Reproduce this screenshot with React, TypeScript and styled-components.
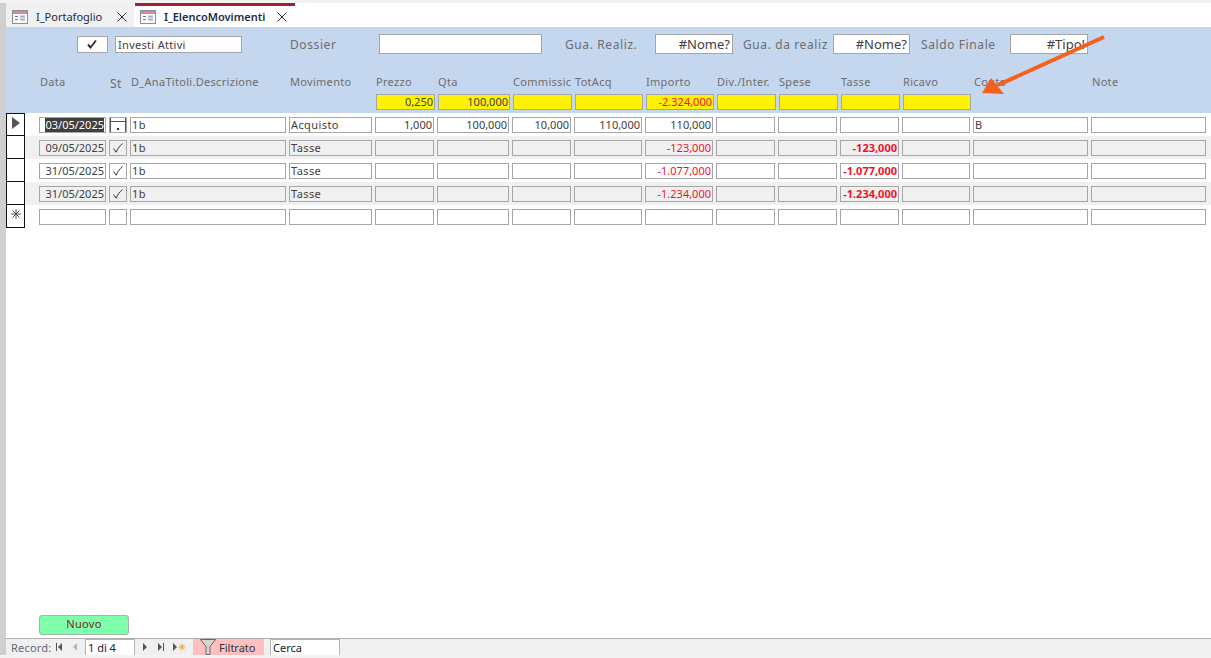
import { createGlobalStyle, styled } from "styled-components";

const COLUMNS = "67px 18px 156px 83px 59px 72px 59px 68px 68px 59px 59px 59px 68px 115px 115px";

const GlobalStyle = createGlobalStyle`
  html, body {
    margin: 0;
    padding: 0;
    background: #fff;
  }
  * {
    box-sizing: border-box;
  }
`;

const Window = styled.div`
  position: relative;
  display: flex;
  width: 1211px;
  height: 658px;
  flex-direction: column;
  overflow: hidden;
  padding-top: 3px;
  background: #f3f3f3;
  color: #404040;
  font-family: "Noto Sans", sans-serif;
  font-size: 11px;
`;

const Frame = styled.div`
  display: flex;
  min-height: 0;
  flex: 1;
  flex-direction: column;
  border-left: 6px solid #cfcfcf;
  background: #fff;
`;

const TabStrip = styled.div`
  display: flex;
  height: 24px;
  flex: none;
  align-items: stretch;
  background: #fff;
`;

const Tab = styled.div<{ $active?: boolean }>`
  display: flex;
  width: ${({ $active }) => ($active ? "160px" : "128px")};
  align-items: center;
  margin-right: ${({ $active }) => ($active ? "0" : "1px")};
  padding: ${({ $active }) => ($active ? "0 8px 0 5px" : "3px 7px 0 6px")};
  border-top: ${({ $active }) => ($active ? "3px solid #a1202f" : "0")};
  background: ${({ $active }) => ($active ? "#fff" : "#f0f0f0")};
  color: #1f2a44;
  font-size: 11px;
  font-weight: ${({ $active }) => ($active ? 600 : 400)};
`;

const TabLabel = styled.span`
  flex: 1;
  margin-left: 7px;
  white-space: nowrap;
`;

const Header = styled.header`
  height: 86px;
  flex: none;
  padding-top: 7px;
  background: #c5d7ef;
`;

const TopRow = styled.div`
  display: flex;
  height: 20px;
  align-items: center;
`;

const Box = styled.div<{ $width: number; $left: number; $height?: number }>`
  display: flex;
  width: ${({ $width }) => $width}px;
  height: ${({ $height }) => $height ?? 20}px;
  flex: none;
  align-items: center;
  justify-content: flex-end;
  margin-left: ${({ $left }) => $left}px;
  padding: 0 2px 1px 1px;
  border: 1px solid #a6a6a6;
  background: #fff;
  color: #404040;
  font-size: 13px;
  white-space: nowrap;
`;

const NameBox = styled(Box)`
  justify-content: flex-start;
  padding: 0 1px 0 2px;
  font-size: 11px;
  letter-spacing: 0.3px;
`;

const CheckBox = styled(Box)`
  justify-content: center;
`;

const TopLabel = styled.span<{ $width: number; $left: number }>`
  width: ${({ $width }) => $width}px;
  flex: none;
  margin-left: ${({ $left }) => $left}px;
  color: #6d6d6d;
  font-size: 12px;
  letter-spacing: 0.6px;
  white-space: nowrap;
`;

const ColumnGrid = styled.div`
  display: grid;
  grid-template-columns: ${COLUMNS};
  column-gap: 3px;
`;

const LabelGrid = styled(ColumnGrid)`
  height: 20px;
  align-items: start;
  margin-top: 20px;
  padding-left: 33px;
`;

const ColumnLabel = styled.span<{ $big?: boolean }>`
  overflow: hidden;
  padding-top: ${({ $big }) => ($big ? "2px" : "0")};
  padding-left: 1px;
  color: #6d6d6d;
  font-size: ${({ $big }) => ($big ? "12px" : "11px")};
  letter-spacing: 0.3px;
  line-height: 15px;
  white-space: nowrap;
`;

const TotalsGrid = styled(ColumnGrid)`
  padding-left: 34px;
`;

const Row = styled.div<{ $alt?: boolean }>`
  display: flex;
  height: 23px;
  flex: none;
  background: ${({ $alt }) => ($alt ? "#f0f0f0" : "#fff")};
`;

const Selector = styled.div`
  display: flex;
  width: 19px;
  flex: none;
  align-items: center;
  justify-content: center;
  border-right: 1px solid #111;
  border-bottom: 1px solid #111;
  border-left: 1px solid #111;
  background: #fff;
`;

const FirstSelector = styled(Selector)`
  border-top: 1px solid #111;
`;

const FieldGrid = styled(ColumnGrid)`
  padding-top: 4px;
  padding-left: 14px;
`;

const Field = styled.div<{
  $align?: "left" | "right" | "center";
  $alt?: boolean;
  $tone?: "red" | "strong";
  $yellow?: boolean;
}>`
  display: flex;
  height: 16px;
  align-items: center;
  justify-content: ${({ $align }) =>
    $align === "right" ? "flex-end" : $align === "center" ? "center" : "flex-start"};
  overflow: hidden;
  padding: 0 1px 2px;
  border: 1px solid #a6a6a6;
  background: ${({ $alt, $yellow }) =>
    $yellow ? "#fff200" : $alt ? "#f0f0f0" : "#fff"};
  color: ${({ $tone }) => ($tone ? "#f0102c" : "#404040")};
  font-size: 11px;
  font-weight: ${({ $tone }) => ($tone === "strong" ? 700 : 400)};
  letter-spacing: ${({ $align }) => ($align ? "0" : "0.4px")};
  white-space: nowrap;
`;

const GlyphField = styled(Field)`
  padding: 0;
`;

const Selected = styled.span`
  background: #3f3f3f;
  color: #fff;
`;

const Spacer = styled.div`
  flex: 1;
`;

const NewButton = styled.button`
  width: 90px;
  height: 20px;
  flex: none;
  margin: 0 0 3px 33px;
  padding: 0 0 4px;
  border: 1px solid #9fb6b0;
  border-radius: 3px;
  background: #7fffaa;
  color: #7a1c2c;
  font-family: inherit;
  font-size: 11px;
  letter-spacing: 0.3px;
`;

const StatusBar = styled.footer`
  display: flex;
  height: 17px;
  flex: none;
  align-items: stretch;
  padding-left: 5px;
  border-top: 1px solid #b0b0b0;
  background: #f0f0f0;
  color: #5f6a78;
  font-size: 11px;
`;

const RecordLabel = styled.span`
  width: 42px;
  flex: none;
  letter-spacing: 0.2px;
  line-height: 17px;
  white-space: nowrap;
`;

const NavButton = styled.span<{ $width: number }>`
  display: flex;
  width: ${({ $width }) => $width}px;
  flex: none;
  align-items: center;
  justify-content: center;
`;

const RecordInput = styled.div<{ $width: number }>`
  width: ${({ $width }) => $width}px;
  flex: none;
  padding-left: 2px;
  border: 1px solid #b5b5b5;
  border-bottom: 0;
  background: #fff;
  color: #222;
  font-size: 11px;
  line-height: 15px;
`;

const FilterFlag = styled.div`
  display: flex;
  width: 71px;
  flex: none;
  align-items: center;
  gap: 2px;
  padding-left: 6px;
  border-left: 1px solid #cfcfcf;
  background: #ffbfbf;
  color: #333;
`;

const SearchWrap = styled.div`
  display: flex;
  margin-left: 6px;
`;

const BottomEdge = styled.div`
  height: 3px;
  flex: none;
  background: #f3f3f3;
`;

const RaisedGlyph = styled.svg`
  margin-bottom: 4px;
`;

const ArrowOverlay = styled.svg`
  position: absolute;
  top: 0;
  left: 0;
  pointer-events: none;
`;

function FormIcon() {
  return (
    <svg width="17" height="16" viewBox="0 0 17 16">
      <rect x="0.5" y="1.5" width="15" height="13" fill="#fff" stroke="#8d8d98" />
      <rect x="1" y="2" width="14" height="3" fill="#d9899a" />
      <path d="M3 7.5h3M3 10.5h3" stroke="#6f7f9c" />
      <rect x="8" y="6.5" width="5" height="2" fill="#9fb0c8" />
      <rect x="8" y="9.5" width="5" height="2" fill="#9fb0c8" />
    </svg>
  );
}

function CloseIcon() {
  return (
    <svg width="10" height="10" viewBox="0 0 10 10">
      <path d="M0.5 0.5l9 9M9.5 0.5l-9 9" stroke="#333" strokeWidth="1" fill="none" />
    </svg>
  );
}

function Tick({ bold }: { bold?: boolean }) {
  return (
    <svg width="12" height="12" viewBox="0 0 12 12">
      <path
        d={bold ? "M2 6.5l2.5 3L10 2.5" : "M1.5 6.5l2.7 3.7C5.5 7 7.5 4 10.5 1.5"}
        stroke="#333"
        strokeWidth={bold ? 2 : 1}
        fill="none"
      />
    </svg>
  );
}

function CalendarGlyph() {
  return (
    <svg width="16" height="14" viewBox="0 0 16 14">
      <path d="M0 3.5h16M0.5 0v14M15.5 0v14" stroke="#555" strokeWidth="1" fill="none" />
      <rect x="7" y="10" width="2" height="2" fill="#333" />
    </svg>
  );
}

function CurrentMark() {
  return (
    <RaisedGlyph width="8" height="12" viewBox="0 0 8 12">
      <path d="M0 0l8 6-8 6z" fill="#555" />
    </RaisedGlyph>
  );
}

function NewMark() {
  return (
    <RaisedGlyph width="10" height="10" viewBox="0 0 10 10">
      <path d="M5 0v10M0 5h10M1.5 1.5l7 7M8.5 1.5l-7 7" stroke="#555" strokeWidth="1" />
    </RaisedGlyph>
  );
}

function NavIcon({ kind }: { kind: "first" | "prev" | "next" | "last" | "new" }) {
  const color = kind === "prev" ? "#b5b5b5" : "#555";
  return (
    <svg width={kind === "new" ? 14 : 8} height="8" viewBox={kind === "new" ? "0 0 14 8" : "0 0 8 8"}>
      {kind === "first" && <path d="M1 0h1v8H1zM7 0v8L3 4z" fill={color} />}
      {kind === "prev" && <path d="M6 0v8L2 4z" fill={color} />}
      {kind === "next" && <path d="M2 0v8l4-4z" fill={color} />}
      {kind === "last" && <path d="M1 0v8l4-4zM6 0h1v8H6z" fill={color} />}
      {kind === "new" && (
        <>
          <path d="M0 0v8l4-4z" fill={color} />
          <path d="M9 0.5v7M5.5 4h7M6.5 1.5l5 5M11.5 1.5l-5 5" stroke="#e8a64a" strokeWidth="1" />
        </>
      )}
    </svg>
  );
}

function FunnelIcon() {
  return (
    <svg width="17" height="16" viewBox="0 0 17 16">
      <path d="M0.5 0.5h15l-5.5 7v8h-4v-8z" fill="#d8d4d4" stroke="#666" />
    </svg>
  );
}

const labels = [
  "Data",
  "St",
  "D_AnaTitoli.Descrizione",
  "Movimento",
  "Prezzo",
  "Qta",
  "Commissic",
  "TotAcq",
  "Importo",
  "Div./Inter.",
  "Spese",
  "Tasse",
  "Ricavo",
  "Conto",
  "Note",
];

const totals = [
  { text: "0,250" },
  { text: "100,000" },
  { text: "" },
  { text: "" },
  { text: "-2.324,000", red: true },
  { text: "" },
  { text: "" },
  { text: "" },
  { text: "" },
];

interface Movement {
  date: string;
  type: string;
  importo: string;
  tasse?: string;
}

const movements: Movement[] = [
  { date: "09/05/2025", type: "Tasse", importo: "-123,000", tasse: "-123,000" },
  { date: "31/05/2025", type: "Tasse", importo: "-1.077,000", tasse: "-1.077,000" },
  { date: "31/05/2025", type: "Tasse", importo: "-1.234,000", tasse: "-1.234,000" },
];

function BlankFields({ count, alt }: { count: number; alt?: boolean }) {
  return (
    <>
      {Array.from({ length: count }, (_, i) => (
        <Field key={i} $alt={alt} />
      ))}
    </>
  );
}

export default function App() {
  return (
    <>
      <GlobalStyle />
      <Window>
        <Frame>
          <TabStrip>
            <Tab>
              <FormIcon />
              <TabLabel>I_Portafoglio</TabLabel>
              <CloseIcon />
            </Tab>
            <Tab $active>
              <FormIcon />
              <TabLabel>I_ElencoMovimenti</TabLabel>
              <CloseIcon />
            </Tab>
          </TabStrip>
          <Header>
            <TopRow>
              <CheckBox $width={31} $left={71} $height={17}>
                <Tick bold />
              </CheckBox>
              <NameBox $width={127} $left={7} $height={17}>
                Investi Attivi
              </NameBox>
              <TopLabel $width={89} $left={48}>
                Dossier
              </TopLabel>
              <Box $width={163} $left={0} />
              <TopLabel $width={90} $left={23}>
                Gua. Realiz.
              </TopLabel>
              <Box $width={78} $left={0}>
                #Nome?
              </Box>
              <TopLabel $width={90} $left={10}>
                Gua. da realiz
              </TopLabel>
              <Box $width={77} $left={0}>
                #Nome?
              </Box>
              <TopLabel $width={89} $left={11}>
                Saldo Finale
              </TopLabel>
              <Box $width={78} $left={0}>
                #Tipo!
              </Box>
            </TopRow>
            <LabelGrid>
              {labels.map((label) => (
                <ColumnLabel key={label} $big={label === "St"}>
                  {label}
                </ColumnLabel>
              ))}
            </LabelGrid>
            <TotalsGrid>
              <span />
              <span />
              <span />
              <span />
              {totals.map((total, i) => (
                <Field key={i} $yellow $align="right" $tone={total.red ? "red" : undefined}>
                  {total.text}
                </Field>
              ))}
            </TotalsGrid>
          </Header>

          <Row>
            <FirstSelector>
              <CurrentMark />
            </FirstSelector>
            <FieldGrid>
              <Field $align="right">
                <Selected>03/05/2025</Selected>
              </Field>
              <GlyphField $align="center">
                <CalendarGlyph />
              </GlyphField>
              <Field>1b</Field>
              <Field>Acquisto</Field>
              <Field $align="right">1,000</Field>
              <Field $align="right">100,000</Field>
              <Field $align="right">10,000</Field>
              <Field $align="right">110,000</Field>
              <Field $align="right">110,000</Field>
              <BlankFields count={4} />
              <Field>B</Field>
              <Field />
            </FieldGrid>
          </Row>

          {movements.map((movement, i) => {
            const alt = i % 2 === 0;
            return (
              <Row key={i} $alt={alt}>
                <Selector />
                <FieldGrid>
                  <Field $alt={alt} $align="right">
                    {movement.date}
                  </Field>
                  <GlyphField $alt={alt} $align="center">
                    <Tick />
                  </GlyphField>
                  <Field $alt={alt}>1b</Field>
                  <Field $alt={alt}>{movement.type}</Field>
                  <BlankFields count={4} alt={alt} />
                  <Field $alt={alt} $align="right" $tone="red">
                    {movement.importo}
                  </Field>
                  <BlankFields count={2} alt={alt} />
                  <Field $alt={alt} $align="right" $tone="strong">
                    {movement.tasse}
                  </Field>
                  <BlankFields count={3} alt={alt} />
                </FieldGrid>
              </Row>
            );
          })}

          <Row>
            <Selector>
              <NewMark />
            </Selector>
            <FieldGrid>
              <BlankFields count={15} />
            </FieldGrid>
          </Row>

          <Spacer />
          <NewButton>Nuovo</NewButton>

          <StatusBar>
            <RecordLabel>Record:</RecordLabel>
            <NavButton $width={12}>
              <NavIcon kind="first" />
            </NavButton>
            <NavButton $width={20}>
              <NavIcon kind="prev" />
            </NavButton>
            <RecordInput $width={50}>1 di 4</RecordInput>
            <NavButton $width={20}>
              <NavIcon kind="next" />
            </NavButton>
            <NavButton $width={12}>
              <NavIcon kind="last" />
            </NavButton>
            <NavButton $width={26}>
              <NavIcon kind="new" />
            </NavButton>
            <FilterFlag>
              <FunnelIcon />
              Filtrato
            </FilterFlag>
            <SearchWrap>
              <RecordInput $width={70}>Cerca</RecordInput>
            </SearchWrap>
          </StatusBar>
        </Frame>
        <BottomEdge />
        <ArrowOverlay width="1211" height="658" viewBox="0 0 1211 658">
          <path d="M1104 37L998 85" stroke="#f4611c" strokeWidth="4" fill="none" />
          <path d="M982 93L991 78L1004 94Z" fill="#f4611c" />
        </ArrowOverlay>
      </Window>
    </>
  );
}
